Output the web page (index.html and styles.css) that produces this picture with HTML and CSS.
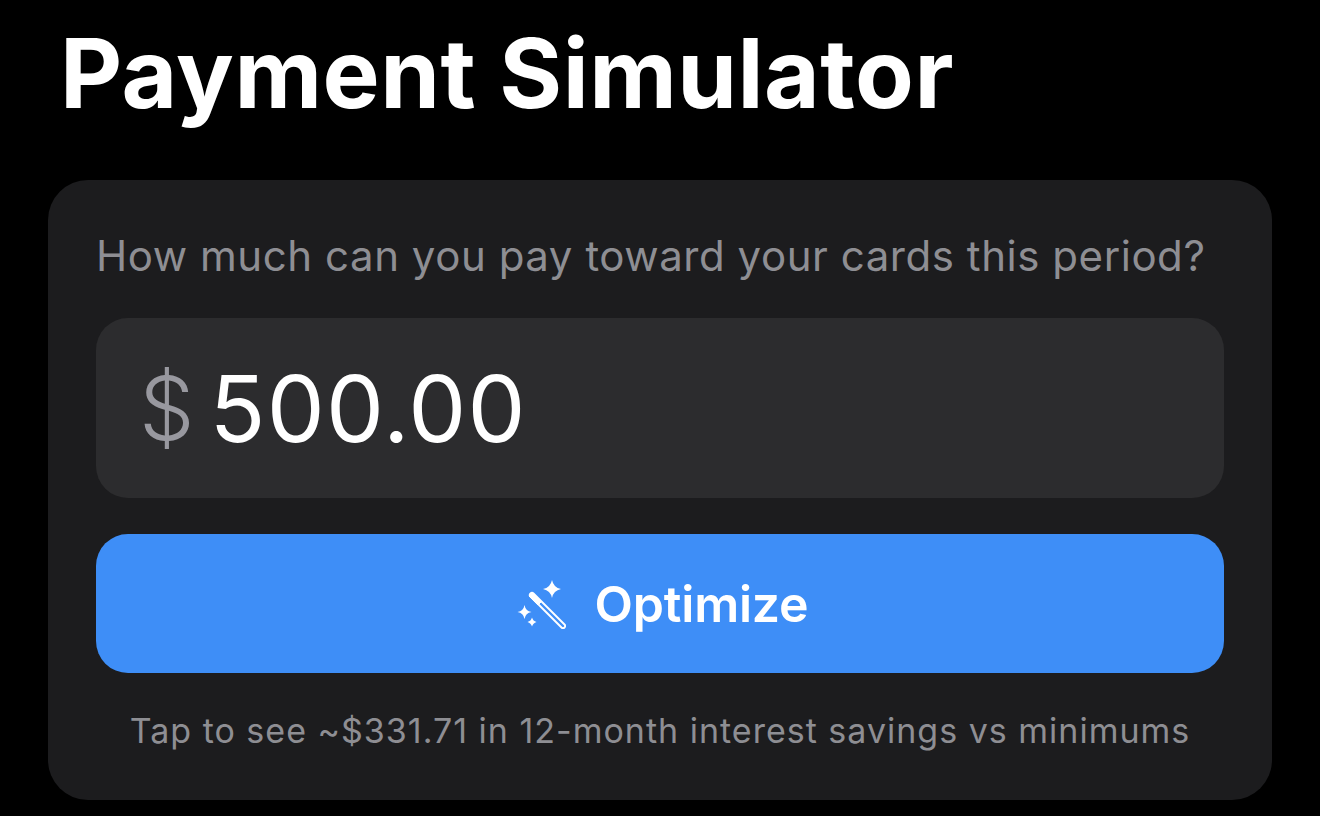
FILE: index.html
```html
<!DOCTYPE html>
<html lang="en">
<head>
<meta charset="utf-8">
<title>Payment Simulator</title>
<link rel="stylesheet" href="styles.css">
</head>
<body>
<main class="page">
  <h1 class="title">Payment Simulator</h1>
  <section class="card">
    <p class="prompt">How much can you pay toward your cards this period?</p>
    <div class="amount">
      <span class="currency">$</span>
      <span class="value">500.00</span>
    </div>
    <button class="optimize" type="button">
      <svg class="wand" viewBox="0 0 50 50" width="50" height="50" aria-hidden="true">
        <path d="M17.5 14.5 L48.5 45.5 A2 2 0 0 1 45.5 48.5 L14.5 17.5 A2 2 0 0 1 17.5 14.5 Z" fill="none" stroke="#fff" stroke-width="1.9" stroke-linejoin="round"/>
        <path d="M15.5 13.5 L25 23 L22 26 L13 17 Z" fill="#fff" stroke="#fff" stroke-width="1" stroke-linejoin="round"/>
        <path d="M36 1 Q37.5 8.5 45 10 Q37.5 11.5 36 19 Q34.5 11.5 27 10 Q34.5 8.5 36 1Z" fill="#fff"/>
        <path d="M8.5 26 Q9.5 32 15.5 33 Q9.5 34 8.5 40 Q7.5 34 1.5 33 Q7.5 32 8.5 26Z" fill="#fff"/>
        <path d="M16 38.5 Q17 42 20.5 43 Q17 44 16 47.5 Q15 44 11.5 43 Q15 42 16 38.5Z" fill="#fff"/>
      </svg>
      <span class="label">Optimize</span>
    </button>
    <p class="hint">Tap to see ~$331.71 in 12-month interest savings vs minimums</p>
  </section>
</main>
</body>
</html>
```
FILE: styles.css
```css
* { box-sizing: border-box; }
html, body { margin: 0; height: 100%; background: #000; }
body { font-family: Inter, "Liberation Sans", sans-serif; overflow: hidden; }
.page { width: 1320px; height: 816px; padding: 0 48px; }
.title {
  margin: 0;
  height: 180px;
  padding: 23px 0 0 12px;
  font-size: 96px;
  line-height: 100px;
  font-weight: 700;
  color: #fff;
  letter-spacing: 0.5px;
}
.card {
  height: 620px;
  background: #1c1c1e;
  border-radius: 40px;
  padding: 48px;
}
.prompt {
  margin: 0;
  height: 54px;
  font-size: 42px;
  line-height: 56px;
  color: #8e8e93;
  white-space: nowrap;
  letter-spacing: 0.55px;
}
.amount {
  margin-top: 36px;
  height: 180px;
  background: #2c2c2e;
  border-radius: 32px;
  display: flex;
  align-items: center;
  gap: 15px;
  padding: 0 43px;
}
.currency { font-size: 88px; color: #98989f; font-weight: 300; }
.value { font-size: 92px; color: #fff; font-weight: 400; letter-spacing: 1.2px; }
.optimize {
  margin-top: 36px;
  width: 100%;
  height: 139px;
  border: 0;
  border-radius: 32px;
  background: #3e8ef7;
  color: #fff;
  font: 600 50px Inter, "Liberation Sans", sans-serif;
  letter-spacing: -0.2px;
  display: flex;
  align-items: center;
  justify-content: center;
  gap: 29px;
  padding: 0 0 0 4px;
}
.hint {
  margin: 36px 0 0;
  text-align: center;
  font-size: 34px;
  line-height: 44px;
  color: #8e8e93;
  white-space: nowrap;
  letter-spacing: 1px;
}
```
